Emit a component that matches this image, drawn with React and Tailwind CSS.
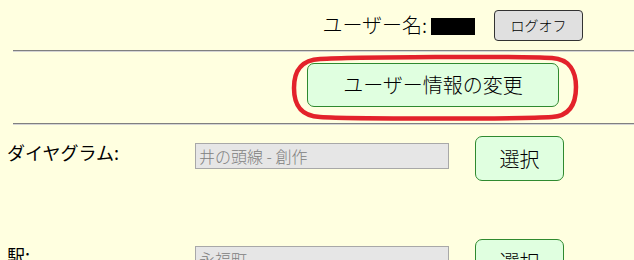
import React from "react";

function Row({ label, value }) {
  return (
    <div className="flex items-start h-[103px]">
      <div className="ml-[7px] w-[188px] mt-[18px] text-[18px] leading-none">{label}</div>
      <div className="mt-[18px] w-[254px] h-[26px] border border-[#a8a8a8] bg-[#e6e6e6] text-[#808080] text-[16px] leading-[24px] pl-[3px] whitespace-nowrap overflow-hidden font-light">
        {value}
      </div>
      <button className="ml-[26px] mt-[11px] w-[89px] h-[45px] rounded-[7px] border border-[#2f8a2f] bg-[#e0ffe0] text-[20px] leading-none font-light">
        選択
      </button>
    </div>
  );
}

export default function App() {
  return (
    <div className="w-[634px] h-[260px] overflow-hidden bg-[#ffffe0] text-black font-['Noto_Sans_CJK_JP',sans-serif]">
      <div className="h-[50px] flex items-center justify-end pr-[51px]">
        <span className="text-[20px] leading-none font-light">ユーザー名:</span>
        <span className="ml-[4px] w-[44px] h-[17px] bg-black mt-[2px]"></span>
        <button className="ml-[19px] w-[89px] h-[31px] rounded-[4px] border border-[#333] bg-[#e0e0e0] text-[14px] leading-none font-light">
          ログオフ
        </button>
      </div>
      <div className="ml-[13px] border-t border-b border-t-[#808080] border-b-[#d4d4d4]"></div>
      <div className="relative h-[71px] pl-[307px] pt-[11px]">
        <button className="w-[252px] h-[44px] rounded-[7px] border border-[#2f8a2f] bg-[#e0ffe0] text-[20px] leading-none font-light">
          ユーザー情報の変更
        </button>
        <svg
          className="absolute left-[290px] top-[2px]"
          width="290"
          height="67"
          viewBox="0 0 290 67"
        >
          <path
            d="M30 5 C60 3 230 2 262 4 C280 5 286 18 286 33 C286 50 280 62 262 63 C230 65 60 65 30 63 C10 62 4 50 4 34 C4 18 10 6 30 5 Z"
            fill="none"
            stroke="#e3222b"
            strokeWidth="4.5"
          />
        </svg>
      </div>
      <div className="ml-[13px] border-t border-b border-t-[#808080] border-b-[#d4d4d4]"></div>
      <Row label="ダイヤグラム:" value="井の頭線 - 創作" />
      <Row label="駅:" value="永福町" />
    </div>
  );
}
